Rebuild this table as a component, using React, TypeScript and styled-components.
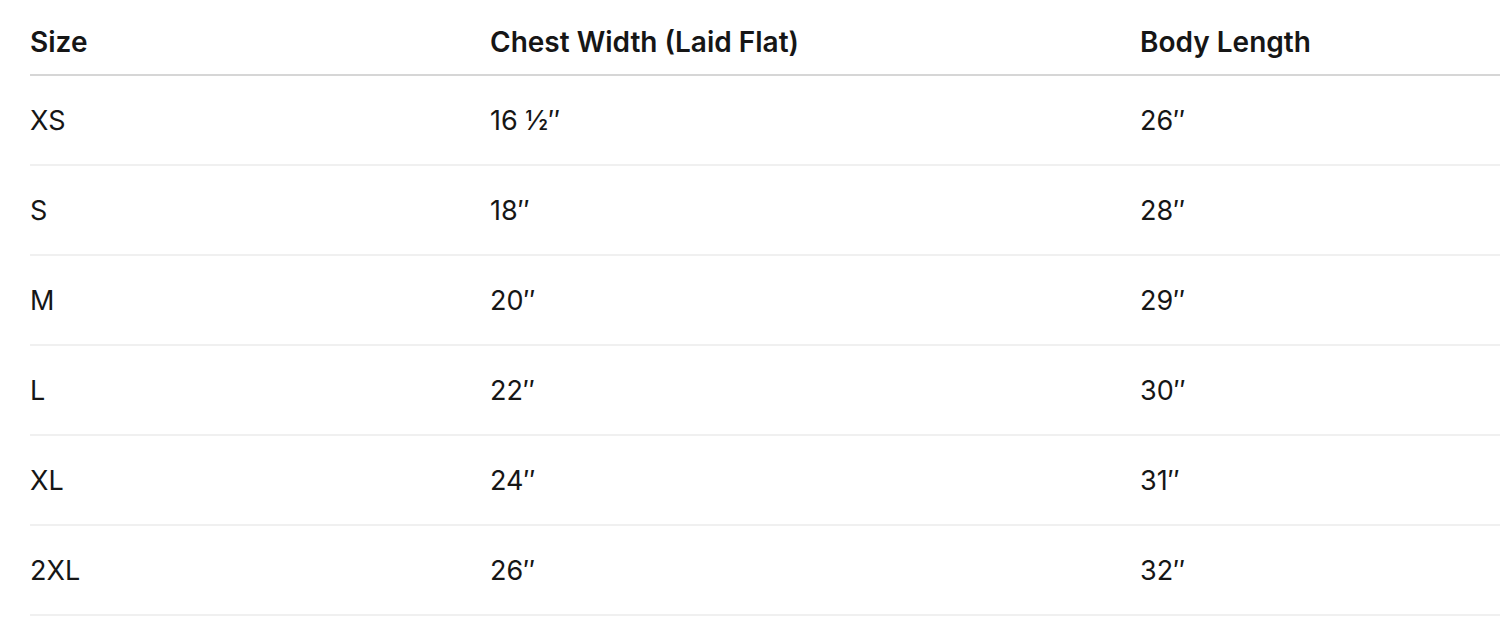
import React from "react";
import styled, { createGlobalStyle } from "styled-components";

const Global = createGlobalStyle`
  html, body { margin: 0; padding: 0; background: #ffffff; }
  body { font-family: Inter, "Noto Sans", "Liberation Sans", sans-serif; color: #161616; }
`;

const Wrap = styled.div`
  padding: 0 0 0 30px;
`;

const Table = styled.div`
  display: grid;
  grid-template-columns: 460px 650px 1fr;
`;

const Row = styled.div<{ $head?: boolean }>`
  display: contents;
  & > div {
    border-bottom: 2px solid ${(p) => (p.$head ? "#d6d6d6" : "#f0f0f0")};
    height: ${(p) => (p.$head ? "76px" : "90px")};
    padding-top: ${(p) => (p.$head ? "10px" : "0")};
    font-weight: ${(p) => (p.$head ? 600 : 400)};
    font-size: ${(p) => (p.$head ? "28px" : "27px")};
  }
`;

const Cell = styled.div`
  display: flex;
  align-items: center;
  line-height: 1;
  box-sizing: border-box;
  white-space: nowrap;
`;

const rows: [string, string, string][] = [
  ["XS", "16 ½″", "26″"],
  ["S", "18″", "28″"],
  ["M", "20″", "29″"],
  ["L", "22″", "30″"],
  ["XL", "24″", "31″"],
  ["2XL", "26″", "32″"],
];

export default function App() {
  return (
    <>
      <Global />
      <Wrap>
        <Table>
          <Row $head>
            <Cell>Size</Cell>
            <Cell>Chest Width (Laid Flat)</Cell>
            <Cell>Body Length</Cell>
          </Row>
          {rows.map((r) => (
            <Row key={r[0]}>
              <Cell>{r[0]}</Cell>
              <Cell>{r[1]}</Cell>
              <Cell>{r[2]}</Cell>
            </Row>
          ))}
        </Table>
      </Wrap>
    </>
  );
}
